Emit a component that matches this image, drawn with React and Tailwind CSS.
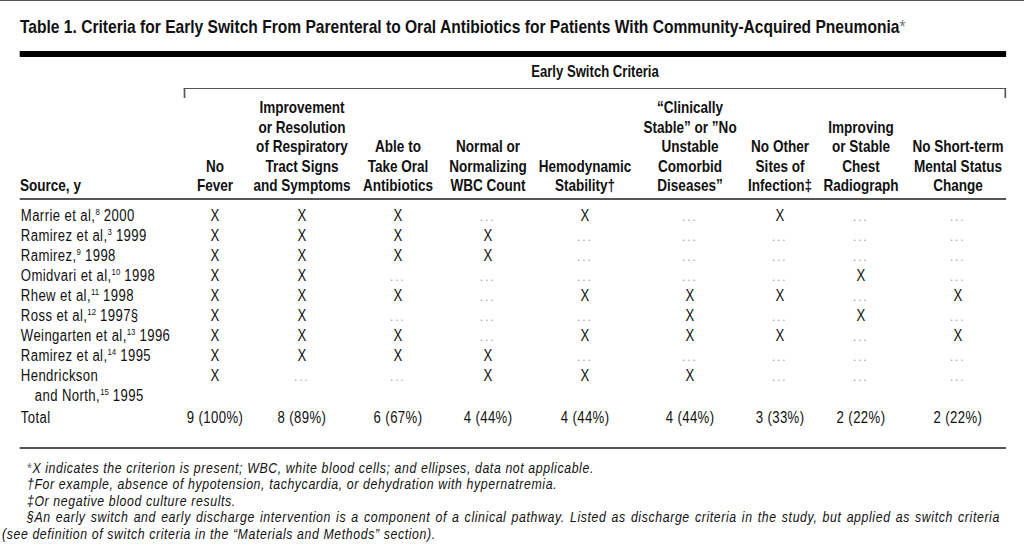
import React from "react";

const cols = "grid grid-cols-[200px_75.6px_136.6px_97.6px_122px_114.6px_141.5px_78px_119.5px_117px]";
const font = { fontFamily: '"Liberation Sans", Arial, sans-serif' };

const Dots = () => (
  <span className="text-[#888] text-[12px] leading-none tracking-[3px]">...</span>
);

const rows = [
  { src: ["Marrie et al,", "8", " 2000"], v: "XXX.X.X.." },
  { src: ["Ramirez et al,", "3", " 1999"], v: "XXXX....." },
  { src: ["Ramirez,", "9", " 1998"], v: "XXXX....." },
  { src: ["Omidvari et al,", "10", " 1998"], v: "XX.....X." },
  { src: ["Rhew et al,", "11", " 1998"], v: "XXX.XXX.X" },
  { src: ["Ross et al,", "12", " 1997§"], v: "XX...X.X." },
  { src: ["Weingarten et al,", "13", " 1996"], v: "XXX.XXX.X" },
  { src: ["Ramirez et al,", "14", " 1995"], v: "XXXX....." },
];

const totals = ["9 (100%)", "8 (89%)", "6 (67%)", "4 (44%)", "4 (44%)", "4 (44%)", "3 (33%)", "2 (22%)", "2 (22%)"];

const Cell = ({ c }) => (
  <div className="text-center h-[20px]">{c === "X" ? "X" : <Dots />}</div>
);

const Sup = ({ children }) => (
  <span className="relative -top-[6px] text-[9.5px] leading-none tracking-normal">{children}</span>
);

export default function App() {
  return (
    <div className="w-[1024px] h-[555px] bg-white border-t border-[#555] overflow-hidden">
      <div className="w-[1249px] origin-top-left [transform:scaleX(0.82)] text-[#111]" style={font}>
        <div className="pl-[24.4px] pt-[15px] text-[19px] leading-[22px] font-bold whitespace-nowrap">
          Table 1. Criteria for Early Switch From Parenteral to Oral Antibiotics for Patients With Community-Acquired Pneumonia
          <span className="font-normal text-[#777]">*</span>
        </div>
        <div className="ml-[24.4px] w-[1202.4px]">
          <div className="mt-[13px] h-[6px] bg-black" />
          <div className={cols}>
            <div />
            <div className="col-span-9 text-center font-bold text-[16px] leading-[20px] pt-[5px] pb-[6px]">Early Switch Criteria</div>
            <div />
            <div className="col-span-9 h-[10px] border-t border-l-2 border-r-2 border-[#555]" />
          </div>
          <div className={cols + " items-end font-bold text-[16.5px] leading-[19.5px] text-center pb-[2px] border-b-2 border-[#555] whitespace-nowrap"}>
            <div className="text-left">Source, y</div>
            <div>No<br />Fever</div>
            <div>Improvement<br />or Resolution<br />of Respiratory<br />Tract Signs<br />and Symptoms</div>
            <div>Able to<br />Take Oral<br />Antibiotics</div>
            <div>Normal or<br />Normalizing<br />WBC Count</div>
            <div>Hemodynamic<br />Stability†</div>
            <div>“Clinically<br />Stable” or ”No<br />Unstable<br />Comorbid<br />Diseases”</div>
            <div>No Other<br />Sites of<br />Infection‡</div>
            <div>Improving<br />or Stable<br />Chest<br />Radiograph</div>
            <div>No Short-term<br />Mental Status<br />Change</div>
          </div>
          <div className="pt-[6px] pb-[19px] text-[16px] leading-[20px] tracking-[0.5px] border-b-2 border-[#555]">
            {rows.map((r, i) => (
              <div key={i} className={cols}>
                <div className="whitespace-nowrap pl-[1px] h-[20px]">
                  {r.src[0]}
                  <Sup>{r.src[1]}</Sup>
                  {r.src[2]}
                </div>
                {r.v.split("").map((c, j) => (
                  <Cell key={j} c={c} />
                ))}
              </div>
            ))}
            <div className={cols}>
              <div className="whitespace-nowrap pl-[1px]">
                Hendrickson
                <br />
                <span className="pl-[17px]">and North,</span>
                <Sup>15</Sup> 1995
              </div>
              {"X..XXX...".split("").map((c, j) => (
                <Cell key={j} c={c} />
              ))}
            </div>
            <div className={cols + " pt-[2px]"}>
              <div className="pl-[1px]">Total</div>
              {totals.map((t, j) => (
                <div key={j} className="text-center whitespace-nowrap">{t}</div>
              ))}
            </div>
          </div>
        </div>
        <div className="pl-[2.4px] pt-[11px] italic text-[15px] leading-[16.6px] tracking-[0.75px] whitespace-nowrap">
          <p className="indent-[30.5px]"><span className="not-italic text-[#666]">*</span>X indicates the criterion is present; WBC, white blood cells; and ellipses, data not applicable.</p>
          <p className="indent-[30.5px]">†For example, absence of hypotension, tachycardia, or dehydration with hypernatremia.</p>
          <p className="indent-[30.5px]">‡Or negative blood culture results.</p>
          <p className="w-[1217px] indent-[30.5px] text-justify [text-align-last:justify]">§An early switch and early discharge intervention is a component of a clinical pathway. Listed as discharge criteria in the study, but applied as switch criteria</p>
          <p>(see definition of switch criteria in the “Materials and Methods” section).</p>
        </div>
      </div>
    </div>
  );
}
